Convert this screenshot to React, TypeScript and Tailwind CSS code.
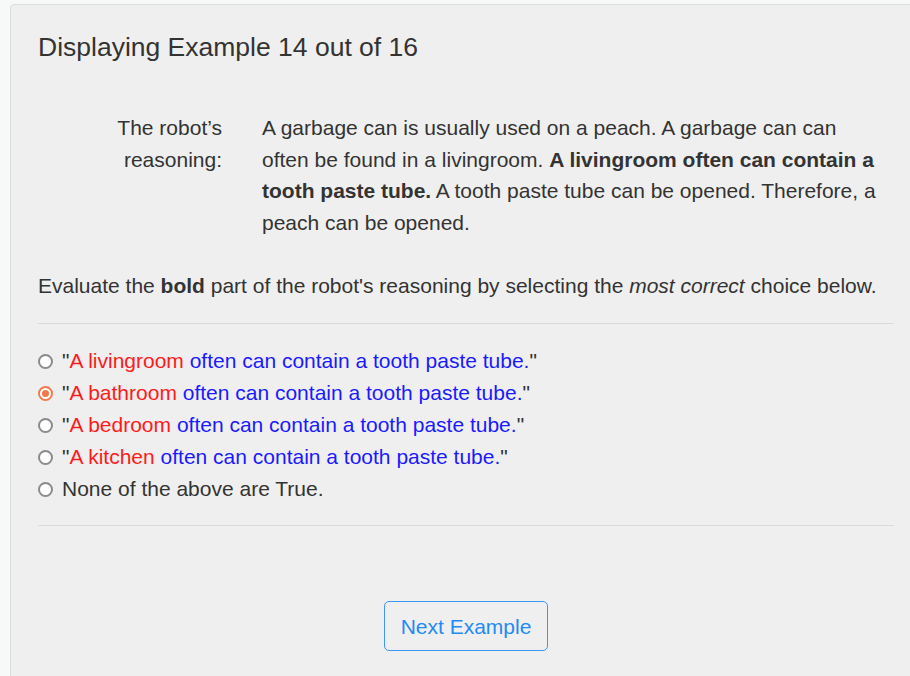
import React from 'react';

const CHOICES = [
  { place: 'A livingroom', rest: ' often can contain a tooth paste tube.' },
  { place: 'A bathroom', rest: ' often can contain a tooth paste tube.' },
  { place: 'A bedroom', rest: ' often can contain a tooth paste tube.' },
  { place: 'A kitchen', rest: ' often can contain a tooth paste tube.' },
];

function Radio({ checked }: { checked: boolean }) {
  return checked ? (
    <span className="flex h-[15px] w-[15px] shrink-0 items-center justify-center rounded-full border-2 border-[#f07a4a] bg-white">
      <span className="h-[7px] w-[7px] rounded-full bg-[#f07a4a]" />
    </span>
  ) : (
    <span className="h-[15px] w-[15px] shrink-0 rounded-full border-2 border-[#8a8a8f] bg-white" />
  );
}

export default function App() {
  const selected = 1;

  return (
    <div
      className="min-h-screen overflow-hidden bg-[#f7f8f8] pl-[10px] pt-[4px] text-[#333]"
      style={{ fontFamily: '"Liberation Sans", Arial, sans-serif' }}
    >
      <div className="w-[912px] rounded border border-[#dcdcdc] bg-[#efefef] px-[27px] pb-[40px] pt-[28px]">
        <h2 className="text-[26.5px] leading-[29px]">Displaying Example 14 out of 16</h2>

        {/* reasoning shown to the evaluator */}
        <div className="mt-[50px] flex text-[21px] leading-[31.6px]">
          <div className="w-[184px] shrink-0 text-right">
            The robot’s
            <br />
            reasoning:
          </div>
          <p className="ml-[40px] w-[620px]">
            A garbage can is usually used on a peach. A garbage can can often be found in a livingroom.{' '}
            <b>A livingroom often can contain a tooth paste tube.</b> A tooth paste tube can be opened. Therefore, a
            peach can be opened.
          </p>
        </div>

        <p className="mt-[32px] text-[21px] leading-[32px]">
          Evaluate the <b>bold</b> part of the robot's reasoning by selecting the <i>most correct</i> choice below.
        </p>

        <hr className="mt-[21px] border-[#dadada]" />

        <div className="mt-[21px] flex flex-col text-[21px] leading-[32px]">
          {CHOICES.map((c, i) => (
            <label key={c.place} className="flex items-center gap-[9px]">
              <Radio checked={i === selected} />
              <span>
                "<span className="text-[#ff1a1a]">{c.place}</span>
                <span className="text-[#1a1aff]">{c.rest}</span>"
              </span>
            </label>
          ))}
          <label className="flex items-center gap-[9px]">
            <Radio checked={false} />
            <span>None of the above are True.</span>
          </label>
        </div>

        <hr className="mt-[20px] border-[#dadada]" />

        <div className="mt-[75px] flex justify-center">
          <button className="h-[50px] rounded-[5px] border border-[#3a97f5] px-[16px] text-[21px] text-[#1f8af5]">
            Next Example
          </button>
        </div>
      </div>
    </div>
  );
}
